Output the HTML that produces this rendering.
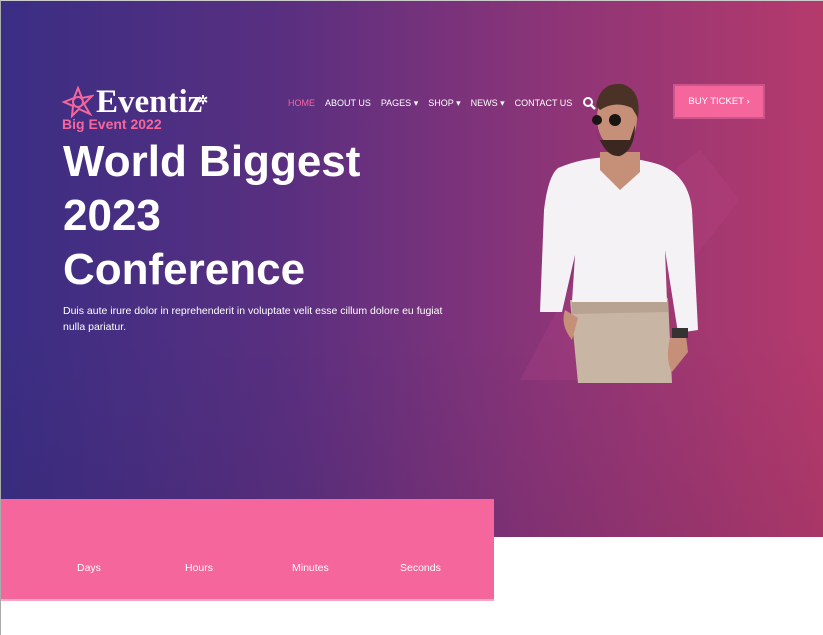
<!DOCTYPE html>
<html><head><meta charset="utf-8"><style>
*{margin:0;padding:0;box-sizing:border-box}
body{width:823px;height:635px;overflow:hidden;background:#fff;font-family:"Liberation Sans",sans-serif;position:relative}
.hero{position:absolute;left:0;top:0;width:823px;height:537px;background:linear-gradient(90deg,#3a2e84 0%,#5a2f80 35%,#8a3478 65%,#b53a6c 100%)}
.hero:after{content:"";position:absolute;left:0;right:0;top:330px;bottom:0;background:linear-gradient(180deg,rgba(0,0,0,0),rgba(20,10,40,.08))}
.frame{position:absolute;left:0;top:0;width:823px;height:635px;border-left:1px solid #aaa;border-top:1px solid #ccc;pointer-events:none;z-index:9}
.logo{position:absolute;left:62px;top:85px;color:#fff;font-family:"Liberation Serif",serif;font-weight:bold;font-size:33px;line-height:34px;z-index:2}
.logo span{position:absolute;left:34px;top:0}
.sub{position:absolute;left:62px;top:116px;color:#f5679c;font-size:14px;font-weight:bold;z-index:2}
.nav{position:absolute;top:98px;left:288px;font-size:9px;color:#fff;z-index:3;display:flex;gap:10px}
.nav .a{color:#f5679c}
.btn{position:absolute;left:673px;top:84px;width:92px;height:35px;background:#f5679c;border:2px solid #c9558a;color:#fff;font-size:9.5px;text-align:center;line-height:31px;z-index:3}
h1{position:absolute;left:63px;top:135px;color:#fff;font-size:44px;line-height:54px;font-weight:bold;z-index:2}
p.d{position:absolute;left:63px;top:303px;width:390px;color:#fff;font-size:10.5px;line-height:16px;z-index:2}
.pink{position:absolute;left:0;top:499px;width:494px;height:102px;background:#f5679c;border-bottom:2px solid #f9a9c6;z-index:2}
.pink div{position:absolute;top:63px;color:#fff;font-size:10.5px}
</style></head><body>
<div class="hero"></div>
<svg style="position:absolute;left:0;top:0;z-index:1" width="823" height="537">
<path d="M520 380 L600 230 L700 150 L740 200 L660 300 L620 380Z" fill="#c04a8a" opacity=".2"/>
<path d="M578 383 L570 300 L668 298 L672 383Z" fill="#c9b5a4"/>
<path d="M572 300 L668 298 L668 312 L572 314Z" fill="#b8a392"/>
<path d="M558 168 Q600 150 650 162 Q688 170 692 210 L698 330 L678 333 L665 250 L667 302 L572 302 L575 255 L562 312 L540 312 L544 210 Q548 176 558 168Z" fill="#f5f2f5"/>
<path d="M600 152 L640 152 L640 172 L620 190 L600 170Z" fill="#c68f78"/>
<ellipse cx="617" cy="118" rx="20" ry="30" fill="#c68f78"/>
<path d="M596 106 Q600 82 622 84 Q642 90 638 118 L632 108 Q615 100 600 110Z" fill="#4a3226"/>
<path d="M596 130 Q605 158 620 156 Q635 150 635 125 L630 140 L600 140Z" fill="#3a2820"/>
<circle cx="597" cy="120" r="5" fill="#1a1414"/><circle cx="615" cy="120" r="6" fill="#1a1414"/>
<path d="M565 310 Q560 325 572 340 L578 318Z" fill="#c68f78"/>
<path d="M670 338 Q665 360 672 372 L688 352 L686 336Z" fill="#c68f78"/>
<rect x="672" y="328" width="16" height="10" fill="#333"/>
</svg>
<div class="logo"><svg width="32" height="32" viewBox="0 0 32 32" style="position:absolute;left:0;top:1px"><g fill="none" stroke="#f5679c" stroke-width="2"><path d="M16 2 L20 12 L30 10 L22 18 L28 28 L17 23 L10 30 L11 20 L2 16 L12 12Z"/><circle cx="16" cy="16" r="5"/></g></svg><span>Eventiz</span><span style="left:136px;top:-2px;font-size:12px">✲</span></div>
<div class="sub">Big Event 2022</div>
<div class="nav"><span class="a">HOME</span><span>ABOUT US</span><span>PAGES ▾</span><span>SHOP ▾</span><span>NEWS ▾</span><span>CONTACT US</span>
<svg width="14" height="14" viewBox="0 0 14 14" style="margin-top:-2px"><circle cx="6" cy="6" r="4" fill="none" stroke="#fff" stroke-width="2"/><path d="M9 9 L13 13" stroke="#fff" stroke-width="2.5"/></svg></div>
<div class="btn">BUY TICKET ›</div>
<h1>World Biggest<br>2023<br>Conference</h1>
<p class="d">Duis aute irure dolor in reprehenderit in voluptate velit esse cillum dolore eu fugiat nulla pariatur.</p>
<div class="pink"><div style="left:77px">Days</div><div style="left:185px">Hours</div><div style="left:292px">Minutes</div><div style="left:400px">Seconds</div></div>
<div class="frame"></div>
</body></html>
